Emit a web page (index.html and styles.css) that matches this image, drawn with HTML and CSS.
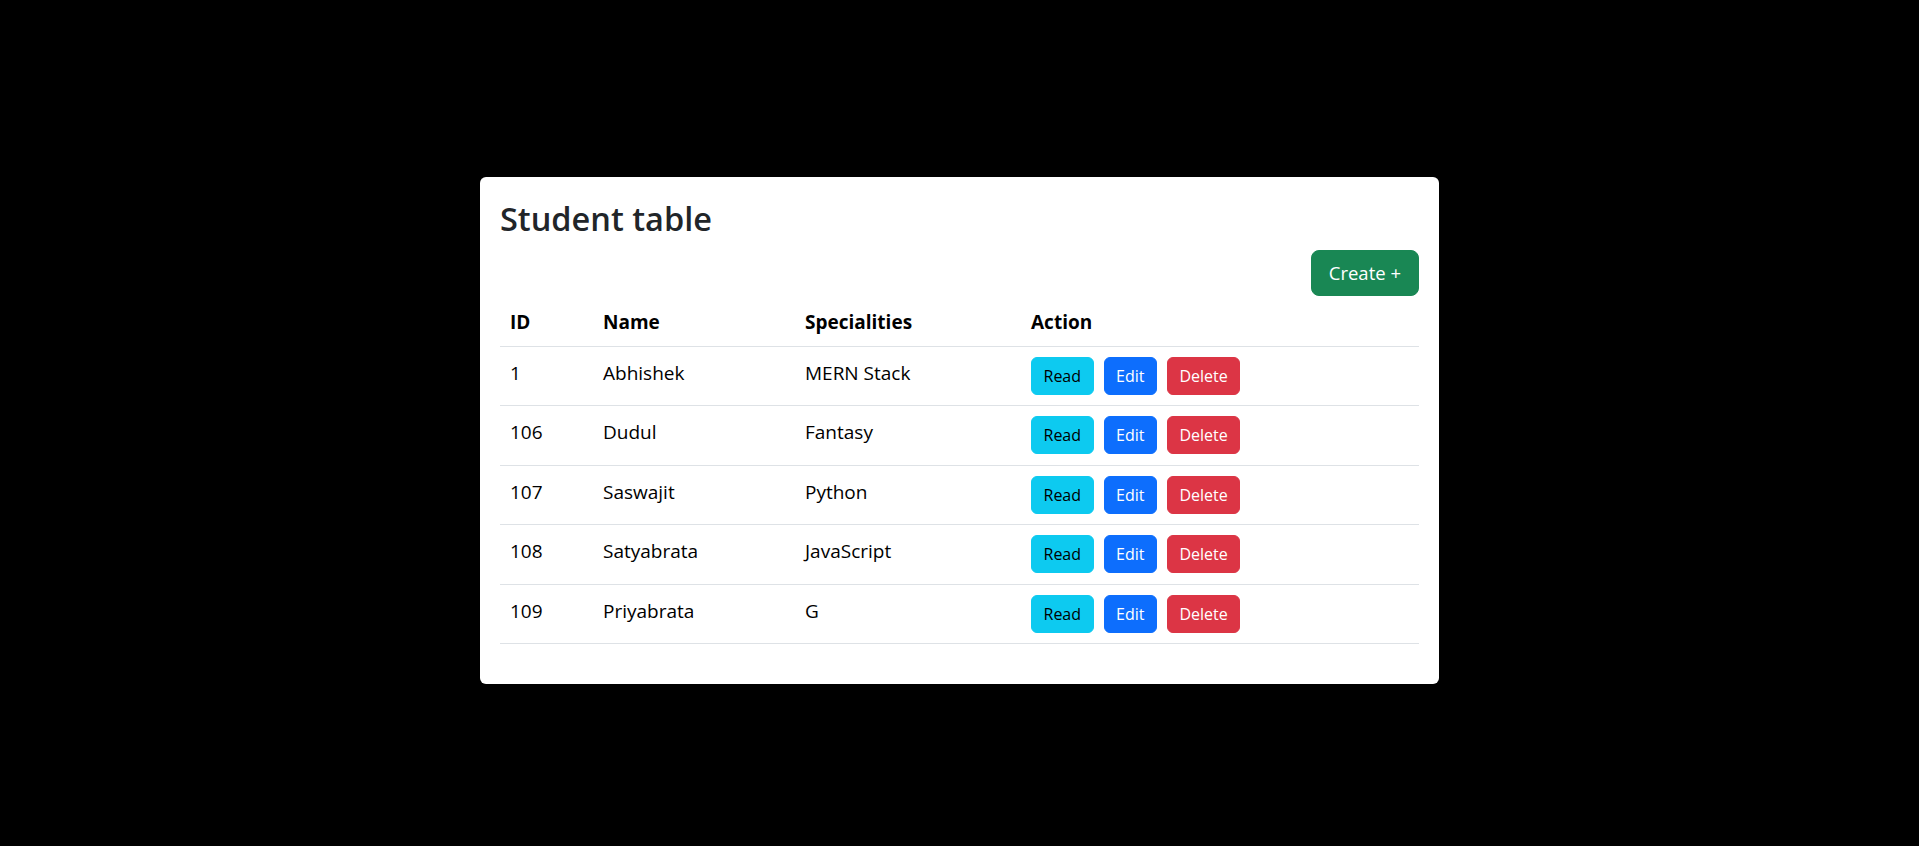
FILE: index.html
```html
<!DOCTYPE html>
<html lang="en">
<head>
<meta charset="utf-8">
<title>Student table</title>
<link rel="stylesheet" href="styles.css">
</head>
<body>
<main class="page">
  <section class="card">
    <h2 class="card-title">Student table</h2>
    <div class="toolbar">
      <button class="btn btn-lg btn-success">Create +</button>
    </div>
    <table class="table">
      <colgroup>
        <col class="c-id"><col class="c-name"><col class="c-spec"><col class="c-act">
      </colgroup>
      <thead>
        <tr><th>ID</th><th>Name</th><th>Specialities</th><th>Action</th></tr>
      </thead>
      <tbody>
        <tr><td>1</td><td>Abhishek</td><td>MERN Stack</td>
          <td class="actions"><div class="btns"><button class="btn btn-info">Read</button><button class="btn btn-primary">Edit</button><button class="btn btn-danger">Delete</button></div></td></tr>
        <tr><td>106</td><td>Dudul</td><td>Fantasy</td>
          <td class="actions"><div class="btns"><button class="btn btn-info">Read</button><button class="btn btn-primary">Edit</button><button class="btn btn-danger">Delete</button></div></td></tr>
        <tr><td>107</td><td>Saswajit</td><td>Python</td>
          <td class="actions"><div class="btns"><button class="btn btn-info">Read</button><button class="btn btn-primary">Edit</button><button class="btn btn-danger">Delete</button></div></td></tr>
        <tr><td>108</td><td>Satyabrata</td><td>JavaScript</td>
          <td class="actions"><div class="btns"><button class="btn btn-info">Read</button><button class="btn btn-primary">Edit</button><button class="btn btn-danger">Delete</button></div></td></tr>
        <tr><td>109</td><td>Priyabrata</td><td>G</td>
          <td class="actions"><div class="btns"><button class="btn btn-info">Read</button><button class="btn btn-primary">Edit</button><button class="btn btn-danger">Delete</button></div></td></tr>
      </tbody>
    </table>
  </section>
</main>
</body>
</html>
```
FILE: styles.css
```css
* { box-sizing: border-box; }
html, body {
  margin: 0;
  padding: 0;
  background: #000;
}
body {
  font-family: "Open Sans", "Noto Sans", "Liberation Sans", sans-serif;
  color: #212529;
  height: 846px;
  overflow: hidden;
}
.page {
  display: flex;
  justify-content: center;
  align-items: flex-start;
  padding-top: 177px;
}
.card {
  width: 959px;
  background: #fff;
  border-radius: 6px;
  padding: 20px 20px 20px 20px;
}
.card-title {
  margin: 0 0 9px 0;
  font-size: 32.5px;
  line-height: 44px;
  font-weight: 600;
  color: #212529;
}
.toolbar {
  display: flex;
  justify-content: flex-end;
  margin-bottom: 8px;
}
.btn {
  font-family: "Open Sans", "Noto Sans", "Liberation Sans", sans-serif;
  font-size: 16px;
  line-height: 24px;
  height: 38px;
  padding: 0 11.5px;
  border: 1px solid transparent;
  border-radius: 6px;
  cursor: pointer;
  white-space: nowrap;
}
.btn-lg {
  font-size: 18.5px;
  height: 46px;
  padding: 0 17px;
  border-radius: 8px;
}
.btn-success { background: #198754; border-color: #198754; color: #fff; }
.btn-info { background: #0dcaf0; border-color: #0dcaf0; color: #000; }
.btn-primary { background: #0d6efd; border-color: #0d6efd; color: #fff; }
.btn-danger { background: #dc3545; border-color: #dc3545; color: #fff; }

.table {
  width: 919px;
  border-collapse: collapse;
  table-layout: fixed;
  margin-bottom: 20px;
  color: #000;
  font-size: 19px;
  line-height: 28px;
}
.c-id { width: 93px; }
.c-name { width: 202px; }
.c-spec { width: 226px; }
.c-act { width: 398px; }
.table th, .table td {
  text-align: left;
  vertical-align: top;
  border-bottom: 1px solid #dee2e6;
  padding: 12px 10px 0 10px;
}
.table th {
  font-weight: 700;
  padding: 4px 10px 10px 10px;
}
.table td.actions {
  padding: 10px 10px 10.4px 10px;
}
.btns {
  display: flex;
  gap: 10px;
}
```
